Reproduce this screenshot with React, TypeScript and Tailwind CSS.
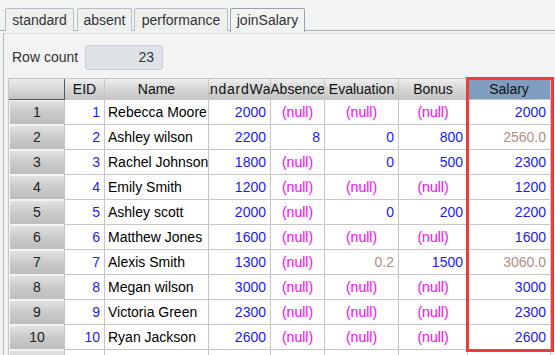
import React from "react";

type Val = { t: string; k: "num" | "null" | "calc" | "text" };

const N = (t: string | number): Val => ({ t: String(t), k: "num" });
const X: Val = { t: "(null)", k: "null" };
const C = (t: string): Val => ({ t, k: "calc" });

const rows: Val[][] = [
  [N(1), { t: "Rebecca Moore", k: "text" }, N(2000), X, X, X, N(2000)],
  [N(2), { t: "Ashley wilson", k: "text" }, N(2200), N(8), N(0), N(800), C("2560.0")],
  [N(3), { t: "Rachel Johnson", k: "text" }, N(1800), X, N(0), N(500), N(2300)],
  [N(4), { t: "Emily Smith", k: "text" }, N(1200), X, X, X, N(1200)],
  [N(5), { t: "Ashley scott", k: "text" }, N(2000), X, N(0), N(200), N(2200)],
  [N(6), { t: "Matthew Jones", k: "text" }, N(1600), X, X, X, N(1600)],
  [N(7), { t: "Alexis Smith", k: "text" }, N(1300), X, C("0.2"), N(1500), C("3060.0")],
  [N(8), { t: "Megan wilson", k: "text" }, N(3000), X, X, X, N(3000)],
  [N(9), { t: "Victoria Green", k: "text" }, N(2300), X, X, X, N(2300)],
  [N(10), { t: "Ryan Jackson", k: "text" }, N(2600), X, X, X, N(2600)],
];

const widths = ["w-[40px]", "w-[104px]", "w-[62px]", "w-[54px]", "w-[74px]", "w-[69px]", "w-[83px]"];
const headers = ["EID", "Name", "StandardWage", "Absence", "Evaluation", "Bonus", "Salary"];

// tab label, width, left gap
const tabs: [string, string, string][] = [
  ["standard", "w-[69px]", "ml-0"],
  ["absent", "w-[55px]", "ml-[3px]"],
  ["performance", "w-[94px]", "ml-[2px]"],
  ["joinSalary", "w-[75px]", "ml-[2px]"],
];

function Cell({ v, w }: { v: Val; w: string }) {
  const base = `${w} h-full shrink-0 border-r border-b border-[#c6c6c6] bg-white flex items-center overflow-hidden whitespace-nowrap`;
  if (v.k === "text") return <div className={`${base} pl-[3px] text-black`}>{v.t}</div>;
  if (v.k === "null") return <div className={`${base} justify-center text-[#ff00ff]`}>{v.t}</div>;
  if (v.k === "calc") return <div className={`${base} justify-end pr-[4px] text-[#b48c86]`}>{v.t}</div>;
  return <div className={`${base} justify-end pr-[4px] text-[#1a1aff]`}>{v.t}</div>;
}

export default function App() {
  return (
    <div
      className="w-[555px] h-[355px] overflow-hidden bg-[#f2f3f3] text-[14px] text-[#222] relative"
      style={{ fontFamily: '"Liberation Sans", Arial, sans-serif' }}
    >
      {/* tabs */}
      <div className="flex pl-[5px] pt-[8px] h-[31px] border-b border-[#a3acb4] relative">
        {tabs.map(([t, w, m], i) => {
          const sel = i === tabs.length - 1;
          return (
            <div
              key={t}
              className={`${w} ${m} shrink-0 h-[23px] flex items-center justify-center border border-b-0 rounded-t-[2px] ${
                sel
                  ? "bg-[#f2f3f3] border-[#9aa3ab] text-[#333] h-[24px] -mb-[1px] z-10"
                  : "bg-[#eef0f0] border-[#b8bfc5] text-[#333]"
              }`}
            >
              {t}
            </div>
          );
        })}
      </div>

      {/* panel */}
      <div className="ml-[3px] border-l border-[#b3bbc2] h-full">
        <div className="border-t border-[#dde1e4] mt-[2px]" />
        <div className="flex items-center pl-[8px] mt-[11px] h-[25px]">
          <span className="w-[73px] text-[#333]">Row count</span>
          <div className="w-[78px] h-[25px] rounded-[3px] bg-[#dfe3e8] border border-[#c9ced4] flex items-center justify-end pr-[8px] text-[#333]">
            23
          </div>
        </div>

        {/* table */}
        <div className="mt-[8px] ml-[4px] relative">
          <div className="flex h-[22px] border-t border-l border-[#c6c6c6]">
            <div className="w-[56px] shrink-0 h-full bg-gradient-to-b from-[#ececec] to-[#c4c4c4] border-r border-b border-[#555]" />
            {headers.map((h, i) => {
              const isSal = i === headers.length - 1;
              const isWage = i === 2;
              return (
                <div
                  key={h}
                  className={`${widths[i]} shrink-0 h-full border-r border-b border-[#c6c6c6] flex items-center overflow-hidden whitespace-nowrap text-[#111] ${
                    isSal
                      ? "bg-[#7f9ebf] justify-center"
                      : isWage
                      ? "bg-gradient-to-b from-[#eeeeee] via-[#d6d6d6] to-[#c6c6c6] justify-start"
                      : "bg-gradient-to-b from-[#eeeeee] via-[#d6d6d6] to-[#c6c6c6] justify-center"
                  }`}
                >
                  {isWage ? (
                    <span className="ml-[-22px] shrink-0 tracking-[0.7px]">{h}</span>
                  ) : (
                    h
                  )}
                </div>
              );
            })}
          </div>

          {rows.map((r, ri) => (
            <div key={ri} className="flex h-[25px] border-l border-[#c6c6c6]">
              <div className="w-[56px] shrink-0 h-full pl-[1px] bg-[#f4f4f4] border-r border-[#c6c6c6]">
                <div className="h-[23px] mt-[1px] bg-gradient-to-b from-[#e2e2e2] via-[#cacaca] to-[#bdbdbd] flex items-center justify-center text-[#222]">
                  {ri + 1}
                </div>
              </div>
              {r.map((v, ci) => (
                <Cell key={ci} v={v} w={widths[ci]} />
              ))}
            </div>
          ))}
          <div className="flex h-[25px] border-l border-[#c6c6c6]">
            <div className="w-[56px] shrink-0 h-full pl-[1px] bg-[#f4f4f4] border-r border-[#c6c6c6]">
              <div className="h-[23px] mt-[1px] bg-gradient-to-b from-[#e2e2e2] via-[#cacaca] to-[#bdbdbd]" />
            </div>
            {widths.map((w, ci) => (
              <div key={ci} className={`${w} shrink-0 h-full border-r border-[#c6c6c6] bg-white`} />
            ))}
          </div>

          {/* highlight frame around Salary */}
          <div className="absolute left-[458px] top-[-1px] w-[88px] h-[275px] border-[3px] border-[#f23a3a] pointer-events-none" />
        </div>
      </div>
    </div>
  );
}
